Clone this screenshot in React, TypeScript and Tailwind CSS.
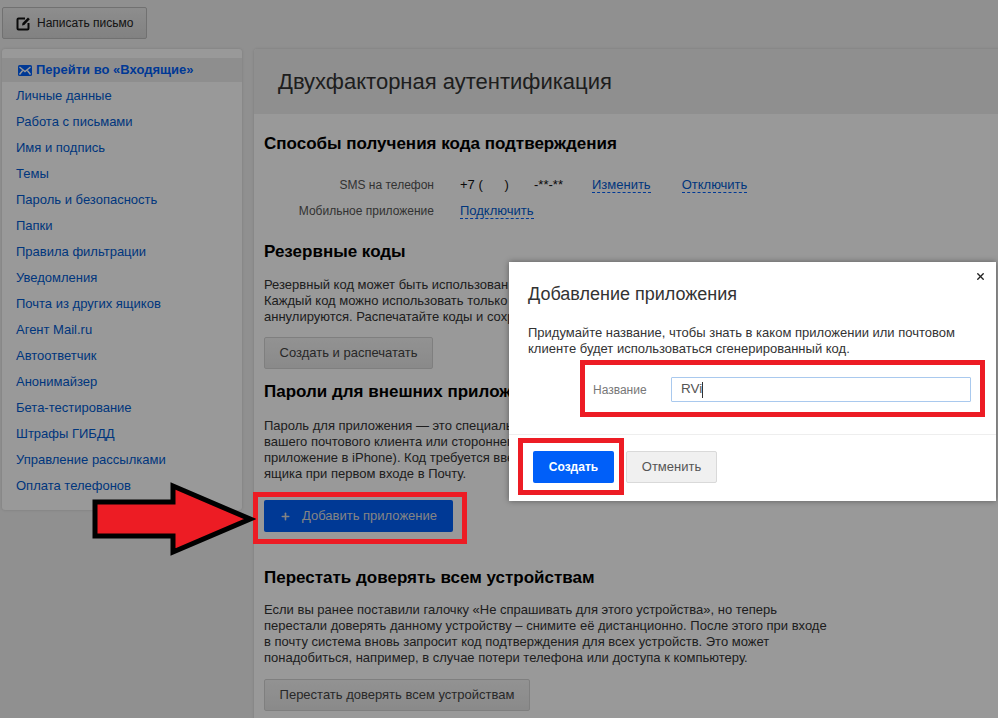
import { Plus, X } from 'lucide-react';

const menuItems = [
  'Личные данные',
  'Работа с письмами',
  'Имя и подпись',
  'Темы',
  'Пароль и безопасность',
  'Папки',
  'Правила фильтрации',
  'Уведомления',
  'Почта из других ящиков',
  'Агент Mail.ru',
  'Автоответчик',
  'Анонимайзер',
  'Бета-тестирование',
  'Штрафы ГИБДД',
  'Управление рассылками',
  'Оплата телефонов',
];

function Sidebar() {
  return (
    <div className="w-[240px] h-[461px] shrink-0 bg-white rounded-[3px] pt-[9px] shadow-[0_0_3px_rgba(0,0,0,0.15)]">
      <div className="h-[24px] mb-px flex items-center pl-[16px] gap-[4px] bg-[#ededed] text-[13px] font-bold text-[#005ff9]">
        <svg width="14" height="11" viewBox="0 0 14 11">
          <rect width="14" height="11" rx="1.5" fill="#005ff9" />
          <path d="M1.5 2 7 6.500 12.500 2M1.500 9.500 5 5M12.500 9.500 9 5" stroke="#fff" strokeWidth="1.400" fill="none" />
        </svg>
        <span>Перейти во «Входящие»</span>
      </div>
      {menuItems.map((item) => (
        <div key={item} className="h-[26px] leading-[26px] pl-[14px] text-[13px] text-[#005bd1]">
          {item}
        </div>
      ))}
    </div>
  );
}

function GrayButton({ label, className }: { label: string; className: string }) {
  return (
    <div className={`h-[32px] flex items-center justify-center bg-linear-to-b from-[#f4f4f4] to-[#e6e6e6] border border-[#d4d4d4] rounded-[2px] text-[13px] text-[#444] ${className}`}>
      {label}
    </div>
  );
}

function MainPanel() {
  return (
    <div className="w-[800px] h-[700px] shrink-0 bg-white rounded-[3px] shadow-[0_0_3px_rgba(0,0,0,0.15)] text-[13px] text-[#333]">
      <div className="h-[65px] bg-[#eeeeee] pl-[24px] pt-[19px] text-[22px] leading-[28px] text-[#333] rounded-t-[3px]">
        Двухфакторная аутентификация
      </div>
      <div className="pl-[10px]">
        <h2 className="mt-[20px] text-[17px] leading-[20px] font-bold text-black">Способы получения кода подтверждения</h2>
        <div className="mt-[18px] flex h-[26px] items-center">
          <div className="w-[170px] text-right text-[12px] text-[#555]">SMS на телефон</div>
          <div className="ml-[26px] w-[132px] text-[#111] whitespace-pre">+7 (      )       -**-**</div>
          <span className="border-b border-dashed border-[#005ff9] leading-[15px] text-[#005bd1]">Изменить</span>
          <span className="ml-[31px] border-b border-dashed border-[#005ff9] leading-[15px] text-[#005bd1]">Отключить</span>
        </div>
        <div className="flex h-[25px] items-center">
          <div className="w-[170px] text-right text-[12px] text-[#555]">Мобильное приложение</div>
          <span className="ml-[26px] border-b border-dashed border-[#005ff9] leading-[15px] text-[#005bd1]">Подключить</span>
        </div>
        <h2 className="mt-[19px] text-[17px] leading-[20px] font-bold text-black">Резервные коды</h2>
        <p className="mt-[15px] w-[565px] leading-[16px] whitespace-pre-line">
          {'Резервный код может быть использован для входа, если нет доступа к телефону.\nКаждый код можно использовать только один раз, после этого старые коды\nаннулируются. Распечатайте коды и сохраните их в надёжном месте.'}
        </p>
        <GrayButton label="Создать и распечатать" className="mt-[12px] w-[169px]" />
        <h2 className="mt-[13px] text-[17px] leading-[20px] font-bold text-black">Пароли для внешних приложений</h2>
        <p className="mt-[16px] w-[565px] leading-[16px] whitespace-pre-line">
          {'Пароль для приложения — это специальный код для входа в почту из\nвашего почтового клиента или стороннего приложения (например,\nприложение в iPhone). Код требуется ввести вместо пароля от\nящика при первом входе в Почту.'}
        </p>
        <div className="mt-[18px] w-[189px] h-[32px] flex items-center bg-[#005ff9] rounded-[2px] text-[#ddd] pl-[16px]">
          <Plus size={11} strokeWidth={3.500} />
          <span className="ml-[11px]">Добавить приложение</span>
        </div>
        <h2 className="mt-[36px] text-[17px] leading-[20px] font-bold text-black">Перестать доверять всем устройствам</h2>
        <p className="mt-[14px] w-[580px] leading-[16px] whitespace-pre-line">
          {'Если вы ранее поставили галочку «Не спрашивать для этого устройства», но теперь\nперестали доверять данному устройству – снимите её дистанционно. После этого при входе\nв почту система вновь запросит код подтверждения для всех устройств. Это может\nпонадобиться, например, в случае потери телефона или доступа к компьютеру.'}
        </p>
        <GrayButton label="Перестать доверять всем устройствам" className="mt-[13px] w-[266px]" />
      </div>
    </div>
  );
}

function Modal() {
  return (
    <div className="absolute left-[509px] top-[262px] w-[487px] h-[239px] bg-white shadow-[0_0_6px_rgba(0,0,0,0.4)] text-[#333]">
      <X size={11} strokeWidth={3} className="absolute right-[10px] top-[9px] text-[#222]" />
      <div className="pl-[19px] pt-[21px] text-[18px] leading-[22px]">Добавление приложения</div>
      <p className="pl-[19px] mt-[20px] text-[13px] leading-[16px] whitespace-pre-line">
        {'Придумайте название, чтобы знать в каком приложении или почтовом\nклиенте будет использоваться сгенерированный код.'}
      </p>
      <div className="mt-[20px] flex items-center h-[25px]">
        <span className="ml-[84px] w-[78px] text-[12px] text-[#777]">Название</span>
        <div className="w-[300px] h-[25px] border border-[#a9c9ee] rounded-[1px] pl-[9px] text-[13.500px] text-[#555] flex items-center">
          RVi<span className="w-px h-[16px] bg-[#333]" />
        </div>
      </div>
      <div className="mt-[32px] border-t border-[#eeeeee] pt-[16px] pl-[24px] flex gap-[12px] items-center">
        <div className="w-[81px] h-[32px] bg-[#005ff9] rounded-[2px] flex items-center justify-center text-[12px] font-bold text-white">Создать</div>
        <div className="w-[91px] h-[32px] bg-[#f0f0f0] border border-[#d9d9d9] rounded-[2px] flex items-center justify-center text-[13px] text-[#555]">Отменить</div>
      </div>
    </div>
  );
}

export default function App() {
  return (
    <div className="relative h-[718px] w-[998px] overflow-hidden bg-[#f0f0f0] font-['Liberation_Sans',Arial,sans-serif]">
      <div className="pt-[7px] pl-[2px]">
        <div className="w-[145px] h-[32px] flex items-center pl-[13px] gap-[6px] bg-linear-to-b from-[#ececec] to-[#d8d8d8] border border-[#bdbdbd] rounded-[2px] text-[12px] text-[#222]">
          <svg width="15" height="15" viewBox="0 0 15 15" fill="none">
            <path d="M9 2.500H2.500a1 1 0 0 0-1 1v9a1 1 0 0 0 1 1h9a1 1 0 0 0 1-1V7" stroke="#111" strokeWidth="2" />
            <path d="M6 9.500 6.500 7 12 1.500l1.800 1.800L8.300 9z" fill="#111" />
          </svg>
          <span>Написать письмо</span>
        </div>
        <div className="mt-[10px] flex gap-[12px]">
          <Sidebar />
          <MainPanel />
        </div>
      </div>

      {/* dimmed backdrop of the dialog */}
      <div className="absolute inset-0 bg-black/40" />

      <Modal />

      {/* red annotations drawn on top of the screenshot */}
      <div className="absolute left-[253px] top-[492px] w-[214px] h-[52px] border-[5px] border-[#ed1c24]" />
      <div className="absolute left-[580px] top-[360px] w-[405px] h-[57px] border-[5px] border-[#ed1c24]" />
      <div className="absolute left-[518px] top-[438px] w-[106px] h-[57px] border-[5px] border-[#ed1c24]" />
      <svg className="absolute left-[90px] top-[482px]" width="166" height="74" viewBox="0 0 166 74">
        <path d="M5 20H83V4L160 37 83 70V54H5z" fill="#ed1c24" stroke="#000" strokeWidth="5" strokeLinejoin="miter" />
      </svg>
    </div>
  );
}
